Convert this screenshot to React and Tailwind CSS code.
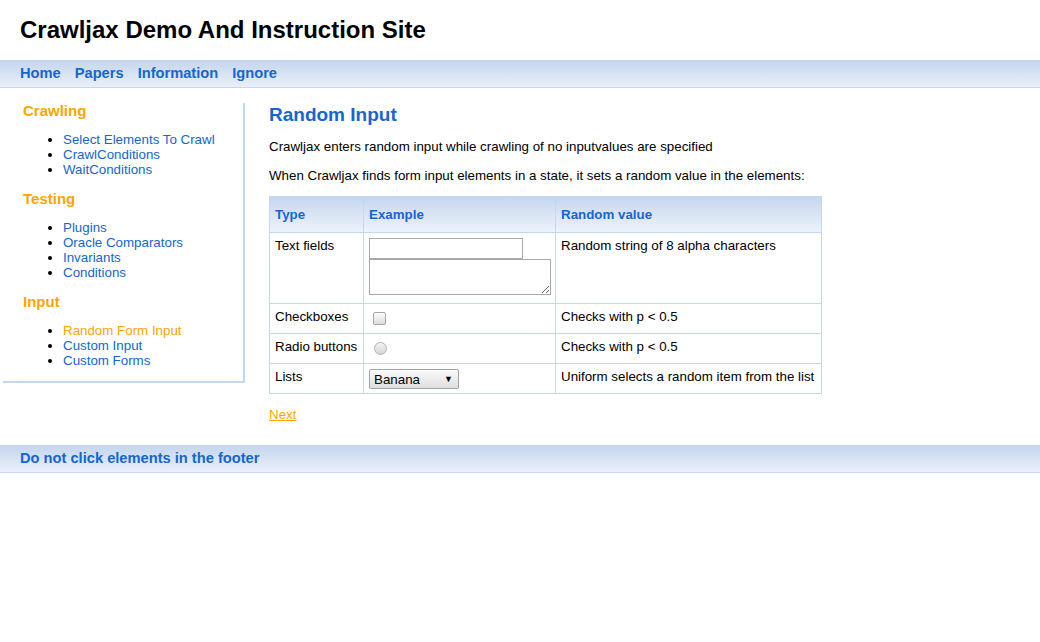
import React from "react";

const navLinks = ["Home", "Papers", "Information", "Ignore"];

const sections = [
  { title: "Crawling", items: ["Select Elements To Crawl", "CrawlConditions", "WaitConditions"] },
  { title: "Testing", items: ["Plugins", "Oracle Comparators", "Invariants", "Conditions"] },
  { title: "Input", items: ["Random Form Input", "Custom Input", "Custom Forms"], active: "Random Form Input" },
];

function Sidebar() {
  return (
    <div className="ml-[3px] w-[242px] shrink-0 self-start border-r-2 border-b-2 border-[#c5d6ef] pl-[20px] pb-[13px]">
      {sections.map((s, i) => (
        <div key={s.title} className={i > 0 ? "mt-[14px]" : ""}>
          <h3 className="text-[15px] leading-[16px] font-bold text-[#ffa500]">{s.title}</h3>
          <ul className="mt-[13px] list-disc pl-[40px] text-[13.33px] leading-[15px]">
            {s.items.map((it) => (
              <li key={it}>
                <a href="#" className={it === s.active ? "text-[#ffa500]" : "text-[#1566d1]"}>
                  {it}
                </a>
              </li>
            ))}
          </ul>
        </div>
      ))}
    </div>
  );
}

function Checkbox() {
  return (
    <input
      type="checkbox"
      className="mt-[3px] ml-[4px] block h-[13px] w-[13px] appearance-none rounded-[2px] border border-[#a6a6a6] bg-gradient-to-b from-[#fcfcfc] to-[#dcdcdc]"
    />
  );
}

function Radio() {
  return (
    <input
      type="radio"
      className="mt-[3px] ml-[5px] block h-[13px] w-[13px] appearance-none rounded-full border border-[#b4b4b4] bg-gradient-to-b from-[#f4f4f4] to-[#d4d4d4]"
    />
  );
}

function Select() {
  return (
    <div className="flex h-[20px] w-[90px] items-center justify-between rounded-[2px] border border-[#a3a3a3] bg-gradient-to-b from-[#fbfbfb] to-[#dedede] pl-[4px] pr-[5px]">
      <select className="appearance-none bg-transparent text-[13.33px] leading-[15px] text-black outline-none">
        <option>Banana</option>
      </select>
      <span className="text-[9px] leading-none text-black">▼</span>
    </div>
  );
}

export default function App() {
  const base = "border border-[#c5d6ef] px-[5px] pt-[5px] align-top";
  const cell = `${base} pb-[7px]`;
  const tight = `${base} pb-[3px]`;
  const head = "border border-[#c5d6ef] px-[5px] text-left align-middle font-bold text-[#1566d1]";
  return (
    <div className="min-h-[642px] bg-white text-[13.33px] leading-[15px] text-black" style={{ fontFamily: '"Liberation Sans", Arial, sans-serif' }}>
      <header className="flex h-[60px] items-center px-[20px]">
        <h1 className="text-[24px] leading-[28px] font-bold">Crawljax Demo And Instruction Site</h1>
      </header>

      <nav className="flex h-[28px] items-center gap-[14px] border-b border-[#c5d6ef] bg-gradient-to-b from-[#c4d5ee] to-[#eaf0f9] px-[20px]">
        {navLinks.map((l) => (
          <a key={l} href="#" className="text-[14.67px] leading-[17px] font-bold text-[#1566d1]">
            {l}
          </a>
        ))}
      </nav>

      <div className="flex gap-[24px] pt-[15px] pb-[23px]">
        <Sidebar />

        <main className="pt-[1px]">
          <h2 className="text-[19px] leading-[22px] font-bold text-[#1566d1]">Random Input</h2>
          <p className="mt-[13px]">Crawljax enters random input while crawling of no inputvalues are specified</p>
          <p className="mt-[14px]">When Crawljax finds form input elements in a state, it sets a random value in the elements:</p>

          <table className="mt-[13px] w-[552px] table-fixed border-collapse">
            <colgroup>
              <col className="w-[94px]" />
              <col className="w-[192px]" />
              <col className="w-[266px]" />
            </colgroup>
            <thead>
              <tr className="h-[36px] bg-gradient-to-b from-[#c6d7ef] to-[#eef3fa]">
                <th className={head}>Type</th>
                <th className={head}>Example</th>
                <th className={head}>Random value</th>
              </tr>
            </thead>
            <tbody>
              <tr className="h-[71px]">
                <td className={cell}>Text fields</td>
                <td className={cell}>
                  <input type="text" className="block h-[21px] w-[154px] border border-[#a9a9a9] bg-white outline-none" />
                  <textarea className="block h-[36px] w-[182px] border border-[#a9a9a9] bg-white outline-none" />
                </td>
                <td className={cell}>Random string of 8 alpha characters</td>
              </tr>
              <tr className="h-[30px]">
                <td className={cell}>Checkboxes</td>
                <td className={cell}>
                  <Checkbox />
                </td>
                <td className={cell}>Checks with p &lt; 0.5</td>
              </tr>
              <tr className="h-[30px]">
                <td className={cell}>Radio buttons</td>
                <td className={cell}>
                  <Radio />
                </td>
                <td className={cell}>Checks with p &lt; 0.5</td>
              </tr>
              <tr className="h-[30px]">
                <td className={tight}>Lists</td>
                <td className={tight}>
                  <Select />
                </td>
                <td className={tight}>Uniform selects a random item from the list</td>
              </tr>
            </tbody>
          </table>

          <p className="mt-[13px]">
            <a href="#" className="text-[#ffa500] underline">Next</a>
          </p>
        </main>
      </div>

      <footer className="flex h-[28px] items-center border-b border-[#c5d6ef] bg-gradient-to-b from-[#c4d5ee] to-[#eaf0f9] px-[20px]">
        <span className="text-[14.67px] leading-[17px] font-bold text-[#1566d1]">Do not click elements in the footer</span>
      </footer>
    </div>
  );
}
